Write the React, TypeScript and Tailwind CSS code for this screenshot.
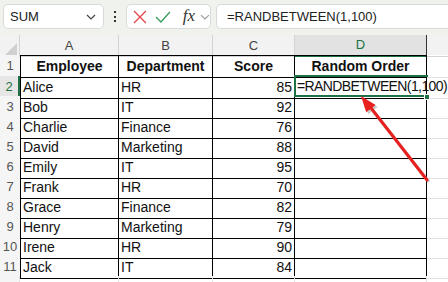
import React from "react";

const rows: [string, string, number][] = [
  ["Alice", "HR", 85],
  ["Bob", "IT", 92],
  ["Charlie", "Finance", 76],
  ["David", "Marketing", 88],
  ["Emily", "IT", 95],
  ["Frank", "HR", 70],
  ["Grace", "Finance", 82],
  ["Henry", "Marketing", 79],
  ["Irene", "HR", 90],
  ["Jack", "IT", 84],
];

const gridCols = "grid grid-cols-[20px_99px_94px_82px_132px_1fr]";

export default function App() {
  return (
    <div className="w-[448px] h-[282px] overflow-hidden bg-white font-['Liberation_Sans',Arial,sans-serif] text-[#111]">
      {/* Toolbar */}
      <div className="h-[35px] bg-[#f0f3ed] flex items-start pt-[4px] pl-[3px] gap-0">
        <div className="w-[101px] h-[25px] bg-white border border-[#d9dcd6] rounded-[5px] flex items-center justify-between pl-[6px] pr-[6px]">
          <span className="text-[13px] text-[#222]">SUM</span>
          <svg width="10" height="6" viewBox="0 0 10 6" className="mr-[1px]">
            <path d="M1 1 L5 5 L9 1" stroke="#444" strokeWidth="1.2" fill="none" />
          </svg>
        </div>
        <div className="w-[22px] h-[25px] flex flex-col items-center justify-center gap-[2.5px]">
          <div className="w-[2px] h-[2px] bg-[#333]" />
          <div className="w-[2px] h-[2px] bg-[#333]" />
          <div className="w-[2px] h-[2px] bg-[#333]" />
        </div>
        <div className="w-[85px] h-[25px] bg-white border border-[#d9dcd6] rounded-[5px] flex items-center pl-[6px]">
          <svg width="14" height="14" viewBox="0 0 14 14">
            <path d="M1 1 L13 13 M13 1 L1 13" stroke="#e5484d" strokeWidth="1.3" fill="none" />
          </svg>
          <svg width="16" height="14" viewBox="0 0 16 14" className="ml-[8px]">
            <path d="M1 7 L6 12 L15 2" stroke="#3a9a5b" strokeWidth="1.3" fill="none" />
          </svg>
          <span className="ml-[12px] font-['Liberation_Serif',serif] italic text-[17px] leading-none text-[#333] -mt-[2px]">fx</span>
          <svg width="10" height="6" viewBox="0 0 10 6" className="ml-[5px]">
            <path d="M1 1 L5 5 L9 1" stroke="#999" strokeWidth="1.1" fill="none" />
          </svg>
        </div>
        <div className="ml-[5px] flex-1 h-[25px] bg-white border border-[#d9dcd6] border-r-0 rounded-l-[5px] flex items-center pl-[10px]">
          <span className="text-[13px] text-[#222]">=RANDBETWEEN(1,100)</span>
        </div>
      </div>

      {/* Sheet */}
      <div className="relative">
        {/* Column headers */}
        <div className={`${gridCols} h-[20px] bg-[#f2f2f2] text-[13px] text-[#444]`}>
          <div className="relative border-r border-[#d4d4d4]">
            <div className="absolute right-[2px] bottom-[2px] w-0 h-0 border-l-[12px] border-l-transparent border-b-[12px] border-b-[#d0d0d0]" />
          </div>
          <div className="flex items-center justify-center border-r border-[#d4d4d4] border-b border-b-[#d4d4d4]">A</div>
          <div className="flex items-center justify-center border-r border-[#d4d4d4] border-b border-b-[#d4d4d4]">B</div>
          <div className="flex items-center justify-center border-r border-[#d4d4d4] border-b border-b-[#d4d4d4]">C</div>
          <div className="flex items-center justify-center bg-[#e2e2e2] text-[#1e7145] border-r border-[#333] border-b-2 border-b-[#1e7145]">D</div>
          <div className="border-b border-[#d4d4d4]" />
        </div>

        {/* Header row 1 */}
        <div className={`${gridCols} h-[21px] text-[14px]`}>
          <div className="bg-[#f5f5f5] text-[#555] text-[13px] flex items-center justify-center border-b border-[#e2e2e2]">1</div>
          <div className="border-l border-t border-r border-b border-black font-bold flex items-center justify-center">Employee</div>
          <div className="border-t border-r border-b border-black font-bold flex items-center justify-center">Department</div>
          <div className="border-t border-r border-b border-black font-bold flex items-center justify-center">Score</div>
          <div className="border-t border-r border-b border-black font-bold flex items-center justify-center">Random Order</div>
          <div className="border-b border-[#e2e2e2]" />
        </div>

        {rows.map(([name, dept, score], i) => (
          <div key={name} className={`${gridCols} h-[20px] text-[14px]`}>
            <div
              className={
                i === 0
                  ? "bg-[#e6e6e6] text-[#1e7145] text-[13px] flex items-center justify-center border-b border-[#e2e2e2] border-r-2 border-r-[#1e7145]"
                  : "bg-[#f5f5f5] text-[#555] text-[13px] flex items-center justify-center border-b border-[#e2e2e2]"
              }
            >
              {i + 2}
            </div>
            <div className="border-l border-r border-b border-black flex items-center pl-[2px] pt-[1px]">{name}</div>
            <div className="border-r border-b border-black flex items-center pl-[2px] pt-[1px]">{dept}</div>
            <div className="border-r border-b border-black flex items-center justify-end pr-[2px] pt-[1px]">{score}</div>
            <div className="border-r border-b border-black" />
            <div className="border-b border-[#e2e2e2]" />
          </div>
        ))}

        <div className={`${gridCols} h-[20px]`}>
          <div className="bg-[#f5f5f5] border-r border-[#e2e2e2]" />
          <div className="border-r border-[#e2e2e2]" />
          <div className="border-r border-[#e2e2e2]" />
          <div className="border-r border-[#e2e2e2]" />
          <div className="border-r border-[#e2e2e2]" />
          <div />
        </div>

        {/* Active cell D2 overlay */}
        <div className="absolute left-[294px] top-[40px] w-[134px] h-[22px] border-2 border-[#1e7145] border-r-0 pointer-events-none" />
        <div className="absolute left-[424px] top-[59px] w-[6px] h-[6px] bg-[#1e7145] border border-white" />
        <div className="absolute left-[297px] top-[41px] h-[20px] flex items-center pt-[1px] text-[14px] tracking-[-0.6px] text-[#111] whitespace-nowrap">
          =RANDBETWEEN(1,100)
          <span className="ml-[2px] w-[1px] h-[15px] bg-black inline-block" />
        </div>

        {/* Arrow */}
        <svg className="absolute left-0 top-0 pointer-events-none" width="448" height="247" viewBox="0 35 448 247">
          <line x1="429" y1="182" x2="373" y2="111" stroke="#888" strokeOpacity="0.45" strokeWidth="3" />
          <polygon points="363,98 377.6,106.9 368.2,114.3" fill="#888" fillOpacity="0.45" />
          <line x1="427" y1="180" x2="371" y2="108" stroke="#e8201f" strokeWidth="3" strokeLinecap="round" />
          <polygon points="361,96 375.6,104.9 366.2,112.3" fill="#e8201f" />
        </svg>
      </div>
    </div>
  );
}
